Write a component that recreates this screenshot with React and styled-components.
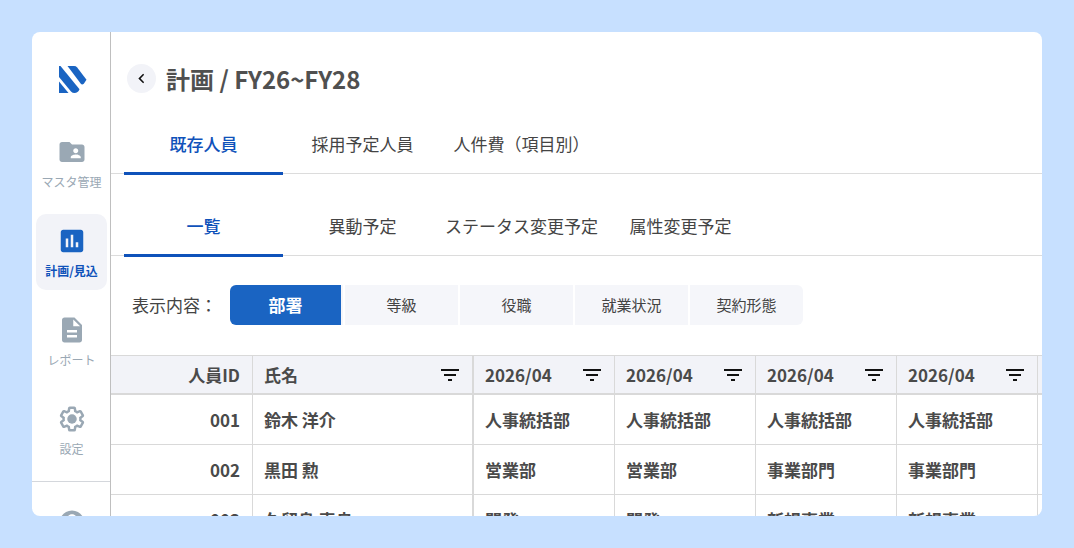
import { useState } from "react";
import styled, { createGlobalStyle, css } from "styled-components";
import {
  MdAssessment,
  MdChevronLeft,
  MdDescription,
  MdFilterList,
  MdFolderShared,
  MdHelp,
} from "react-icons/md";

const mainTabs = ["既存人員", "採用予定人員", "人件費（項目別）"];
const subTabs = ["一覧", "異動予定", "ステータス変更予定", "属性変更予定"];
const displayTypes = ["部署", "等級", "役職", "就業状況", "契約形態"];
const months = ["2026/04", "2026/04", "2026/04", "2026/04"];

const people = [
  {
    id: "001",
    name: "鈴木 洋介",
    values: ["人事統括部", "人事統括部", "人事統括部", "人事統括部"],
  },
  {
    id: "002",
    name: "黒田 勲",
    values: ["営業部", "営業部", "事業部門", "事業部門"],
  },
  {
    id: "003",
    name: "久留島 恵良",
    values: ["開発", "開発", "新規事業", "新規事業"],
  },
];

const menus = [
  { label: "マスタ管理", icon: MdFolderShared },
  { label: "計画/見込", icon: MdAssessment },
  { label: "レポート", icon: MdDescription },
  { label: "設定", icon: GearIcon },
];

function Logo() {
  return (
    <svg width="28" height="28" viewBox="0 0 28 28" fill="#1a64c2">
      <path d="M8.500 0h6.500q2 0 3.200 1.400L27.500 13.800l-2.700 3.900q-1.700 1.500-3.200-.2z" />
      <path d="M0 0h1.500L20.500 23.200q-1.500 3.800-5 3.800-2 0-3.500-1.600L0 11z" />
      <path d="M0 15.500L9.500 27H0z" />
    </svg>
  );
}

function GearIcon() {
  return (
    <svg width="1em" height="1em" viewBox="0 0 24 24" fill="none">
      <path
        transform="translate(1.200 1.200) scale(.9)"
        stroke="currentColor"
        strokeWidth="2.200"
        d="M19.430 12.980c.04-.32.07-.64.07-.98 0-.34-.03-.66-.07-.98l2.110-1.650c.19-.15.24-.42.12-.64l-2-3.460c-.09-.16-.26-.25-.44-.25-.06 0-.12.01-.17.03l-2.490 1c-.52-.4-1.080-.73-1.690-.98l-.38-2.650C14.460 2.180 14.250 2 14 2h-4c-.25 0-.46.18-.49.42l-.38 2.650c-.61.25-1.170.59-1.690.98l-2.490-1c-.06-.02-.12-.03-.18-.03-.17 0-.34.09-.43.25l-2 3.460c-.13.22-.07.49.12.64l2.110 1.650c-.04.32-.07.65-.07.98 0 .33.03.66.07.98l-2.110 1.650c-.19.15-.24.42-.12.64l2 3.460c.09.16.26.25.44.25.06 0 .12-.01.17-.03l2.490-1c.52.4 1.080.73 1.690.98l.38 2.650c.03.24.24.42.49.42h4c.25 0 .46-.18.49-.42l.38-2.650c.61-.25 1.170-.59 1.690-.98l2.490 1c.06.02.12.03.18.03.17 0 .34-.09.43-.25l2-3.460c.12-.22.07-.49-.12-.64l-2.110-1.650z"
      />
      <circle cx="12" cy="12" r="3.800" fill="currentColor" />
    </svg>
  );
}

function Tabs({ label, items }) {
  const [current, setCurrent] = useState(items[0]);

  return (
    <TabList role="tablist" aria-label={label}>
      {items.map((item) => (
        <Tab
          key={item}
          type="button"
          role="tab"
          aria-selected={item === current}
          $active={item === current}
          onClick={() => setCurrent(item)}
        >
          {item}
        </Tab>
      ))}
    </TabList>
  );
}

export default function App() {
  const [menu, setMenu] = useState("計画/見込");
  const [type, setType] = useState("部署");

  return (
    <Page>
      <GlobalStyle />
      <Window>
        <Sidebar>
          <LogoLink href="#" aria-label="ホーム">
            <Logo />
          </LogoLink>
          <Menu>
            {menus.map(({ label, icon: Icon }) => (
              <MenuItem
                key={label}
                href="#"
                $active={label === menu}
                onClick={() => setMenu(label)}
              >
                <Icon />
                {label}
              </MenuItem>
            ))}
          </Menu>
          <SubMenu>
            <MenuItem href="#" aria-label="ヘルプ">
              <MdHelp />
            </MenuItem>
          </SubMenu>
        </Sidebar>
        <Main>
          <Header>
            <BackButton type="button" aria-label="戻る">
              <MdChevronLeft />
            </BackButton>
            <Title>計画 / FY26~FY28</Title>
          </Header>
          <Tabs label="計画" items={mainTabs} />
          <Tabs label="既存人員" items={subTabs} />
          <Toolbar>
            <span id="display-type">表示内容：</span>
            <Segments role="group" aria-labelledby="display-type">
              {displayTypes.map((item) => (
                <Segment
                  key={item}
                  type="button"
                  aria-pressed={item === type}
                  $active={item === type}
                  onClick={() => setType(item)}
                >
                  {item}
                </Segment>
              ))}
            </Segments>
          </Toolbar>
          <Table>
            <colgroup>
              <Col $width={142} />
              <Col $width={221} />
              {months.map((_, i) => (
                <Col key={i} $width={141} />
              ))}
              <Col />
            </colgroup>
            <thead>
              <tr>
                <Th $right>人員ID</Th>
                <Th $thick>
                  <HeadCell>
                    氏名
                    <FilterButton type="button" aria-label="氏名で絞り込み">
                      <MdFilterList />
                    </FilterButton>
                  </HeadCell>
                </Th>
                {months.map((month, i) => (
                  <Th key={i}>
                    <HeadCell>
                      {month}
                      <FilterButton
                        type="button"
                        aria-label={`${month}で絞り込み`}
                      >
                        <MdFilterList />
                      </FilterButton>
                    </HeadCell>
                  </Th>
                ))}
                <Th />
              </tr>
            </thead>
            <tbody>
              {people.map(({ id, name, values }) => (
                <tr key={id}>
                  <Td $right>{id}</Td>
                  <Td $thick>{name}</Td>
                  {values.map((value, i) => (
                    <Td key={i}>{value}</Td>
                  ))}
                  <Td />
                </tr>
              ))}
            </tbody>
          </Table>
        </Main>
      </Window>
    </Page>
  );
}

const GlobalStyle = createGlobalStyle`
  * {
    box-sizing: border-box;
  }
  body {
    margin: 0;
    color: #444;
    font-family: "Noto Sans CJK JP", "Noto Sans", sans-serif;
    font-size: 17px;
    line-height: 24px;
  }
  button {
    padding: 0;
    border: 0;
    background: none;
    color: inherit;
    font: inherit;
    cursor: pointer;
  }
  a {
    color: inherit;
    text-decoration: none;
  }
  svg {
    display: block;
  }
`;

const Page = styled.div`
  display: flex;
  height: 100vh;
  padding: 32px;
  background-color: #c7e0ff;
`;

const Window = styled.div`
  display: flex;
  flex: 1;
  min-width: 0;
  border-radius: 8px;
  background-color: #fff;
  overflow: hidden;
`;

const Sidebar = styled.aside`
  flex: 0 0 79px;
  border-right: 1px solid #bfbfbf;
`;

const LogoLink = styled.a`
  display: flex;
  justify-content: center;
  padding: 34px 0 31px 4px;
`;

const Menu = styled.nav`
  display: flex;
  flex-direction: column;
  gap: 13px;
  padding: 0 3px 13px 4px;
`;

const SubMenu = styled.nav`
  padding: 14px 3px 0 4px;
  border-top: 1px solid #d4d7dc;
`;

const MenuItem = styled.a`
  display: flex;
  flex-direction: column;
  align-items: center;
  gap: 5px;
  height: 76px;
  padding-top: 12px;
  border-radius: 10px;
  color: #9aa8b4;
  font-size: 12px;
  line-height: 20px;
  white-space: nowrap;

  svg {
    width: 30px;
    height: 30px;
  }

  ${({ $active }) =>
    $active &&
    css`
      background-color: #f2f3f8;
      color: #0f52ba;
      font-weight: 700;

      svg {
        color: #1a64c2;
      }
    `}
`;

const Main = styled.main`
  flex: 1;
  min-width: 0;
  overflow: hidden;
`;

const Header = styled.header`
  display: flex;
  align-items: center;
  gap: 10px;
  padding: 31px 16px 21px;
`;

const BackButton = styled.button`
  display: flex;
  justify-content: center;
  align-items: center;
  width: 29px;
  height: 29px;
  border-radius: 50%;
  background-color: #f2f3f8;
  color: #111;
  font-size: 19px;
`;

const Title = styled.h1`
  margin: 0;
  color: #505050;
  font-size: 24px;
  font-weight: 700;
  line-height: 31px;
`;

const TabList = styled.div`
  display: flex;
  padding-left: 13px;
  box-shadow: inset 0 -1px #fff, inset 0 -2px #dcdcdc;

  & + & {
    margin-top: 22px;
  }
`;

const Tab = styled.button`
  flex: 0 0 159px;
  height: 60px;
  border-bottom: 3px solid transparent;
  padding-top: 1px;
  white-space: nowrap;

  ${({ $active }) =>
    $active &&
    css`
      border-color: #0f52ba;
      color: #0f52ba;
      font-weight: 500;
    `}
`;

const Toolbar = styled.div`
  display: flex;
  align-items: center;
  gap: 13px;
  padding: 28px 21px 30px;
  white-space: nowrap;
`;

const Segments = styled.div`
  display: flex;
  gap: 2px;
  border-radius: 6px;
  overflow: hidden;
`;

const Segment = styled.button`
  width: 113px;
  height: 40px;
  background-color: #f5f6fa;
  font-size: 15px;

  ${({ $active }) =>
    $active &&
    css`
      border-right: 2px solid #f5f6fa;
      background-color: #1a64c2;
      color: #fff;
      font-size: 17px;
      font-weight: 700;
    `}
`;

const Table = styled.table`
  width: 100%;
  border-collapse: separate;
  border-spacing: 0;
  border-top: 1px solid #d9d9d9;
  color: #4a4a4a;
  table-layout: fixed;
`;

const Col = styled.col`
  width: ${({ $width }) => ($width ? `${$width}px` : "auto")};
`;

const cell = css`
  padding: 0 12px 0 11px;
  border-right: ${({ $thick }) => ($thick ? 2 : 1)}px solid #d9d9d9;
  border-bottom: 1px solid #d9d9d9;
  font-weight: 700;
  text-align: ${({ $right }) => ($right ? "right" : "left")};
  white-space: nowrap;

  &:last-child {
    padding: 0;
    border-right: 0;
  }
`;

const Th = styled.th`
  ${cell}
  height: 39px;
  border-bottom-width: 2px;
  background-color: #f2f3f8;
`;

const Td = styled.td`
  ${cell}
  height: 50px;
`;

const HeadCell = styled.div`
  display: flex;
  justify-content: space-between;
  align-items: center;
  margin-right: -2px;
`;

const FilterButton = styled.button`
  color: #111;
  font-size: 24px;
`;
